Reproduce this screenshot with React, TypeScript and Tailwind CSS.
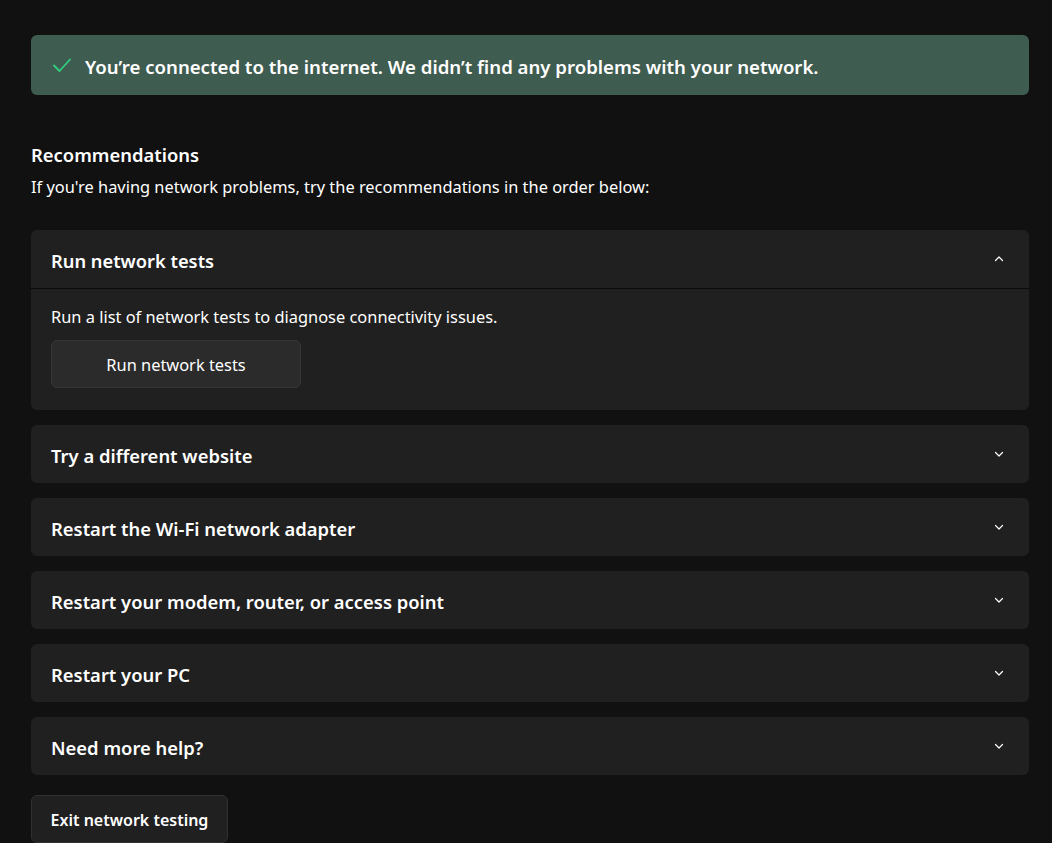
import React from "react";

const font = { fontFamily: '"Noto Sans", "Open Sans", sans-serif' };

function Chevron({ up }: { up?: boolean }) {
  return (
    <svg width="12" height="12" viewBox="0 0 12 12" fill="none" className="text-white">
      <path
        d={up ? "M2.5 7.5 L6 4 L9.5 7.5" : "M2.5 4.5 L6 8 L9.5 4.5"}
        stroke="currentColor"
        strokeWidth="1.2"
        strokeLinecap="round"
        strokeLinejoin="round"
      />
    </svg>
  );
}

function Item({ title }: { title: string }) {
  return (
    <div className="flex h-[58px] items-center justify-between rounded-md bg-[#202020] pl-5 pr-6">
      <span className="pt-1 text-[18.4px] font-semibold text-white">{title}</span>
      <Chevron />
    </div>
  );
}

export default function App() {
  return (
    <div className="min-h-[843px] bg-[#111111] px-[31px] pt-[35px] text-white" style={font}>
      <div className="flex h-[60px] w-[998px] items-center gap-3 rounded-md bg-[#3f5c50] pl-5">
        <svg width="22" height="22" viewBox="0 0 22 22" fill="none">
          <path d="M3 11.5 L8.5 17 L19 5.5" stroke="#2fcf7f" strokeWidth="1.8" strokeLinecap="round" strokeLinejoin="round" />
        </svg>
        <span className="pt-1 text-[18.6px] font-semibold">
          You’re connected to the internet. We didn’t find any problems with your network.
        </span>
      </div>

      <div className="mt-[47px] text-[18.4px] font-semibold leading-[26px]">Recommendations</div>
      <div className="mt-[7px] text-[16.4px] leading-[24px]">
        If you're having network problems, try the recommendations in the order below:
      </div>

      <div className="mt-[31px] flex w-[998px] flex-col gap-[15px]">
        <div className="rounded-md bg-[#202020]">
          <div className="flex h-[59px] items-center justify-between border-b border-[#0c0c0c] pl-5 pr-6">
            <span className="pt-1 text-[18.3px] font-semibold">Run network tests</span>
            <Chevron up />
          </div>
          <div className="px-5 pb-[22px] pt-[16px]">
            <div className="text-[16.4px] leading-[24px]">Run a list of network tests to diagnose connectivity issues.</div>
            <button className="mt-[11px] h-[48px] w-[250px] rounded-md border border-[#363636] bg-[#2b2b2b] pt-0.5 text-[16.4px]">
              Run network tests
            </button>
          </div>
        </div>
        <Item title="Try a different website" />
        <Item title="Restart the Wi-Fi network adapter" />
        <Item title="Restart your modem, router, or access point" />
        <Item title="Restart your PC" />
        <Item title="Need more help?" />
      </div>

      <button className="mt-[20px] h-[48px] w-[197px] rounded-md border border-[#303030] bg-[#202020] pt-0.5 text-[16px] font-semibold">
        Exit network testing
      </button>
    </div>
  );
}
